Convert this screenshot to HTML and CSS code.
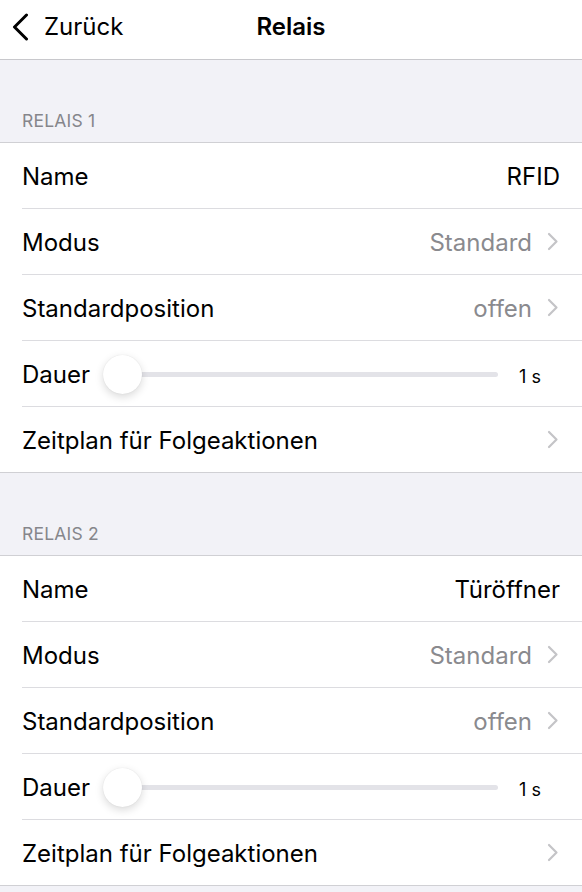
FILE: index.html
```html
<!DOCTYPE html>
<html lang="de">
<head>
<meta charset="utf-8">
<title>Relais</title>
<link rel="stylesheet" href="styles.css">
</head>
<body>
<header class="nav">
  <a class="back" href="#">
    <svg class="back-icon" width="18" height="28" viewBox="0 0 18 28"><path d="M15.5 2 L3.5 14 L15.5 26" fill="none" stroke="#000" stroke-width="3" stroke-linecap="round" stroke-linejoin="round"/></svg>
    <span>Zurück</span>
  </a>
  <h1 class="title">Relais</h1>
</header>

<main>
  <section class="group">
    <div class="group-header">RELAIS 1</div>
    <ul class="list">
      <li class="row"><span class="label">Name</span><span class="value dark">RFID</span></li>
      <li class="row"><span class="label">Modus</span><span class="value">Standard</span><svg class="chev" width="12" height="19" viewBox="0 0 12 19"><path d="M2 2 L9.5 9.5 L2 17" fill="none" stroke="#c4c4c7" stroke-width="2.2" stroke-linecap="round" stroke-linejoin="round"/></svg></li>
      <li class="row"><span class="label">Standardposition</span><span class="value">offen</span><svg class="chev" width="12" height="19" viewBox="0 0 12 19"><path d="M2 2 L9.5 9.5 L2 17" fill="none" stroke="#c4c4c7" stroke-width="2.2" stroke-linecap="round" stroke-linejoin="round"/></svg></li>
      <li class="row"><span class="label">Dauer</span><div class="slider"><div class="track"></div><div class="thumb"></div></div><span class="slider-value">1 s</span></li>
      <li class="row"><span class="label">Zeitplan für Folgeaktionen</span><span class="value"></span><svg class="chev" width="12" height="19" viewBox="0 0 12 19"><path d="M2 2 L9.5 9.5 L2 17" fill="none" stroke="#c4c4c7" stroke-width="2.2" stroke-linecap="round" stroke-linejoin="round"/></svg></li>
    </ul>
  </section>

  <section class="group">
    <div class="group-header">RELAIS 2</div>
    <ul class="list">
      <li class="row"><span class="label">Name</span><span class="value dark">Türöffner</span></li>
      <li class="row"><span class="label">Modus</span><span class="value">Standard</span><svg class="chev" width="12" height="19" viewBox="0 0 12 19"><path d="M2 2 L9.5 9.5 L2 17" fill="none" stroke="#c4c4c7" stroke-width="2.2" stroke-linecap="round" stroke-linejoin="round"/></svg></li>
      <li class="row"><span class="label">Standardposition</span><span class="value">offen</span><svg class="chev" width="12" height="19" viewBox="0 0 12 19"><path d="M2 2 L9.5 9.5 L2 17" fill="none" stroke="#c4c4c7" stroke-width="2.2" stroke-linecap="round" stroke-linejoin="round"/></svg></li>
      <li class="row"><span class="label">Dauer</span><div class="slider"><div class="track"></div><div class="thumb"></div></div><span class="slider-value">1 s</span></li>
      <li class="row"><span class="label">Zeitplan für Folgeaktionen</span><span class="value"></span><svg class="chev" width="12" height="19" viewBox="0 0 12 19"><path d="M2 2 L9.5 9.5 L2 17" fill="none" stroke="#c4c4c7" stroke-width="2.2" stroke-linecap="round" stroke-linejoin="round"/></svg></li>
    </ul>
  </section>
</main>
</body>
</html>
```
FILE: styles.css
```css
* { box-sizing: border-box; }
html, body { margin: 0; padding: 0; }
body {
  width: 582px;
  height: 892px;
  overflow: hidden;
  background: #f2f2f7;
  font-family: "Inter", "Liberation Sans", sans-serif;
  color: #000;
}
.nav {
  height: 60px;
  padding-bottom: 6px;
  background: #fff;
  border-bottom: 1px solid #c8c8cc;
  display: flex;
  align-items: center;
  justify-content: center;
  position: relative;
}
.back {
  position: absolute;
  left: 11px;
  top: 0;
  height: 53px;
  display: flex;
  align-items: center;
  gap: 15px;
  color: #000;
  text-decoration: none;
  font-size: 24px;
}
.back-icon { display: block; }
.title {
  margin: 0;
  font-size: 24px;
  font-weight: 600;
}
.group-header {
  height: 82px;
  padding: 0 22px 11px;
  display: flex;
  align-items: flex-end;
  font-size: 17.5px;
  color: #86868b;
  letter-spacing: 0.2px;
}
.list {
  list-style: none;
  margin: 0;
  padding: 0;
  background: #fff;
  border-top: 1px solid #d0d0d4;
  border-bottom: 1px solid #d0d0d4;
}
.row {
  height: 66px;
  margin-left: 22px;
  padding-right: 23px;
  padding-top: 2px;
  display: flex;
  align-items: center;
  font-size: 24px;
  border-bottom: 1px solid #dcdce0;
}
.row:last-child { border-bottom: none; height: 65px; }
.label { white-space: nowrap; }
.value {
  margin-left: auto;
  color: #8a8a8e;
}
.value.dark { color: #000; margin-right: -1px; }
.chev {
  display: block;
  margin-left: 15px;
  margin-bottom: 2px;
}
.slider {
  flex: 1;
  position: relative;
  height: 40px;
  margin-left: 14px;
  margin-right: 21px;
  display: flex;
  align-items: center;
}
.track {
  width: 100%;
  height: 5px;
  border-radius: 3px;
  background: #e3e3e8;
}
.thumb {
  position: absolute;
  left: -1px;
  top: 0;
  width: 39px;
  height: 39px;
  border-radius: 50%;
  background: #fff;
  box-shadow: 0 3px 8px rgba(0,0,0,0.15), 0 0 1px rgba(0,0,0,0.12);
}
.slider-value {
  font-size: 18px;
  width: 40px;
  padding-top: 4px;
}
```
